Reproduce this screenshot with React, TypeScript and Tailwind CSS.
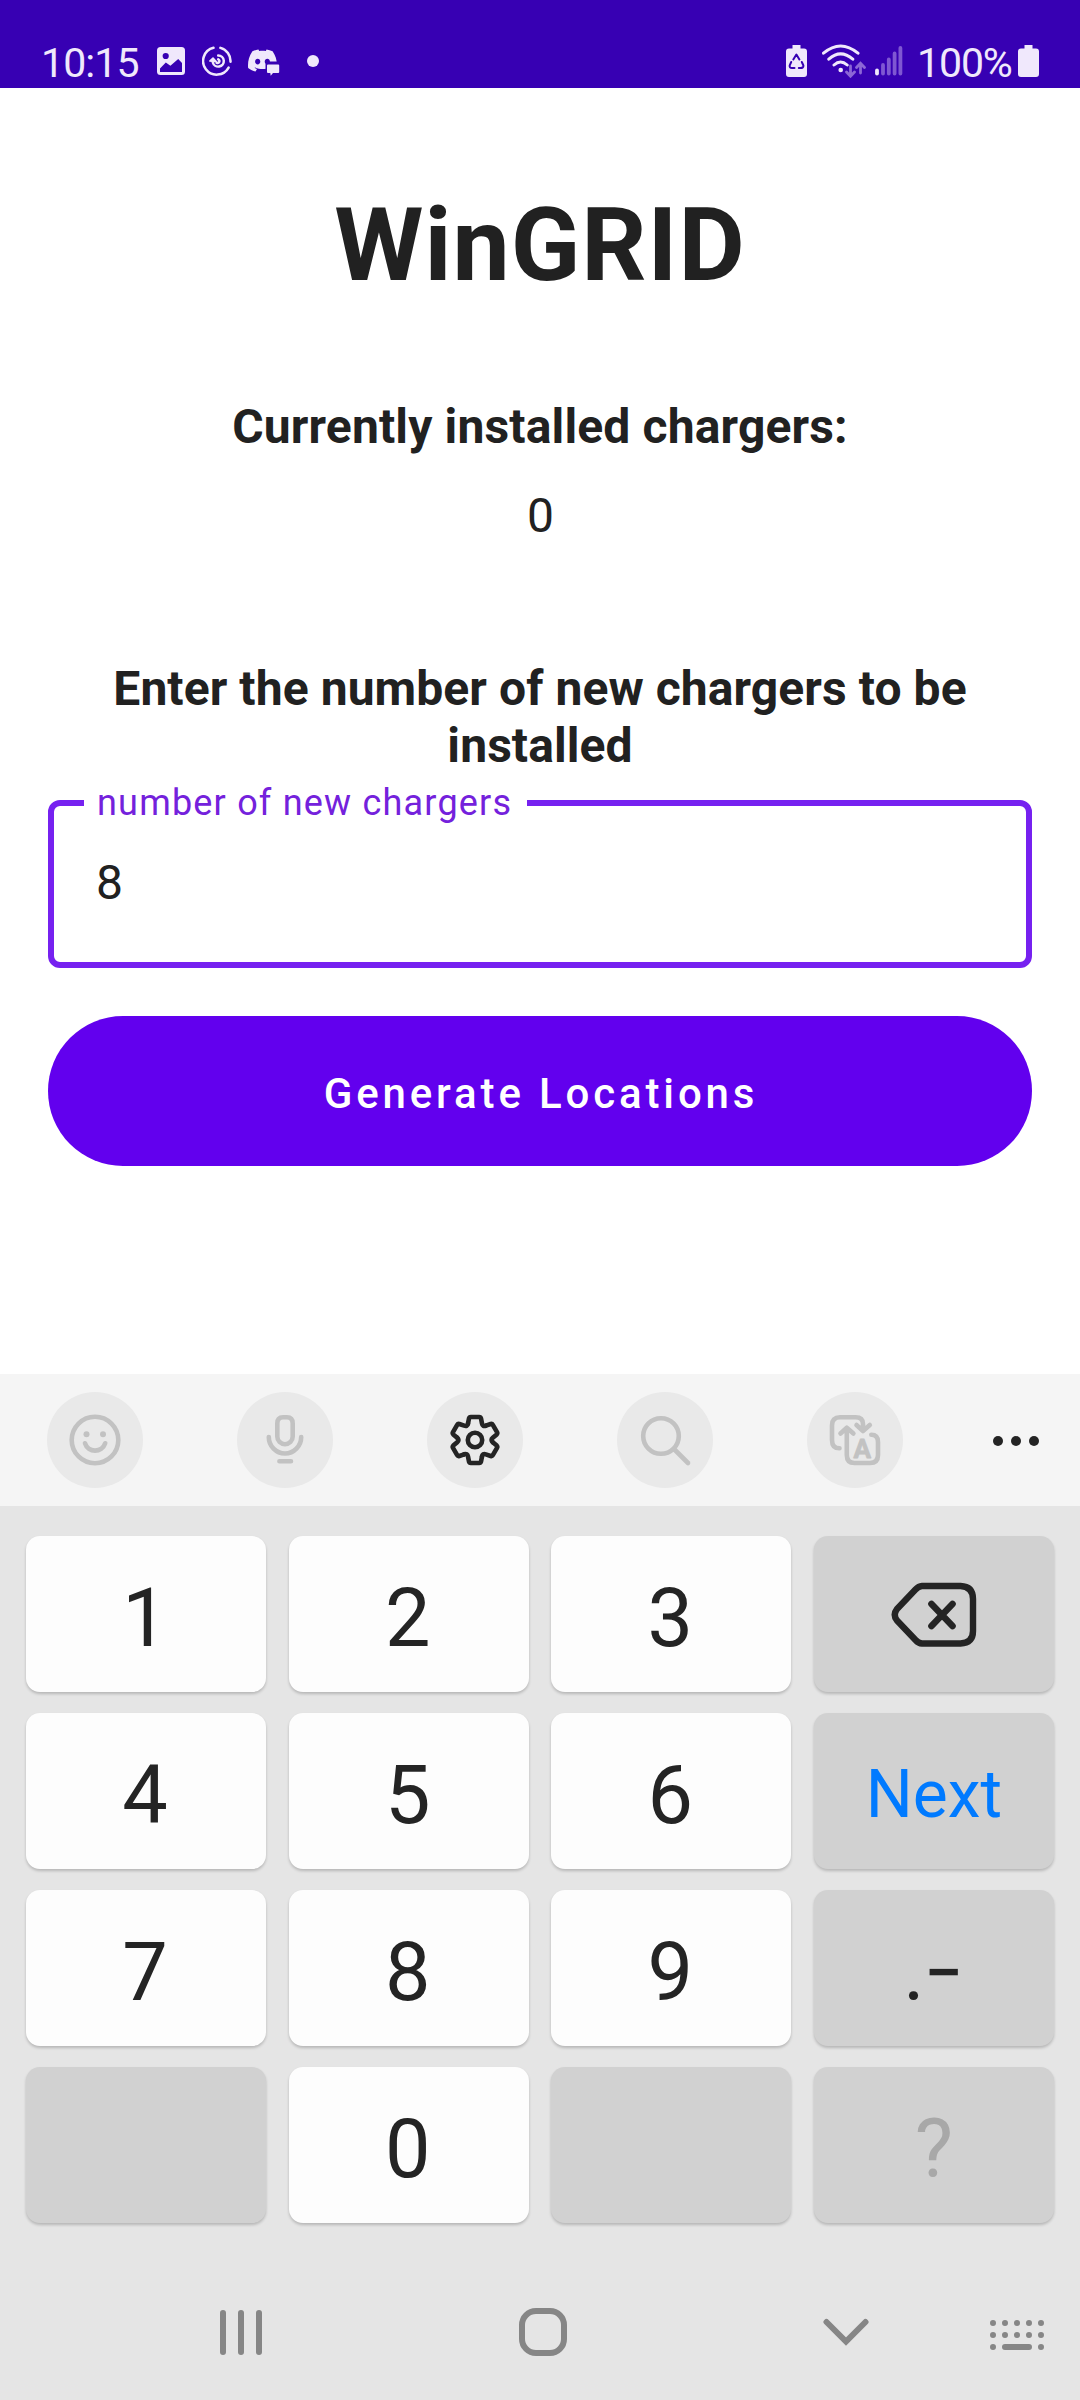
import { useState, type ReactNode } from "react";
import { SiDiscord } from "react-icons/si";

/* ── Status bar ──────────────────────────────────────────────────────── */
function ImageIcon() {
	return (
		<svg className="w-7 h-7" viewBox="0 0 28 28">
			<rect width="28" height="28" rx="3.5" fill="currentColor" />
			<circle cx="8.7" cy="9" r="3.1" fill="#3700b3" />
			<path d="M3 21.5 8.8 15.6 13.4 18.8 21.2 12 25 16V25H3Z" fill="#3700b3" />
		</svg>
	);
}

function SyncIcon() {
	return (
		<svg className="w-[30px] h-[30px]" viewBox="0 0 30 30" fill="none" stroke="currentColor" strokeWidth="2.5" strokeLinecap="round">
			<path d="M11.5 1.8A13.6 13.6 0 1 0 26.6 21.6M18.4 1.9A13.6 13.6 0 0 1 28.5 15.8" />
			<path d="M10.8 16.5A5.6 5.6 0 1 0 16.2 9.4M16.2 13.2C18.6 14.8 17 17.6 14.7 16.8" strokeWidth="2.5" />
			<path d="M7.8 15 11 12 14.2 15.600Z" fill="currentColor" strokeWidth="1.6" strokeLinejoin="round" />
		</svg>
	);
}

function DiscordIcon() {
	return (
		<svg className="w-8 h-[30px]" viewBox="0 0 32 30">
			<SiDiscord x="0" y="0" size={29} color="#f0e8fc" />
			<path d="M20 15.5H33V30H17.5V18Q17.5 15.500 20 15.500Z" fill="#3700b3" />
			<path d="M20 18.5H30.2Q31.2 18.5 31.2 19.5V26Q31.2 27 30.2 27H25L22.7 29.7 22.3 27H20Q19 27 19 26V19.5Q19 18.5 20 18.5Z" fill="currentColor" />
		</svg>
	);
}

function BatteryIcon({ children }: { children?: ReactNode }) {
	return (
		<svg className="w-[21px] h-8" viewBox="0 0 21 32">
			<path d="M6.5 0H14.5V3.5H18Q21 3.5 21 6.5V29Q21 32 18 32H3Q0 32 0 29V6.5Q0 3.5 3 3.5H6.5Z" fill="currentColor" />
			{children}
		</svg>
	);
}

function WifiIcon() {
	return (
		<svg className="w-11 h-[34px]" viewBox="0 0 44 34" fill="none" stroke="currentColor" strokeWidth="3" strokeLinecap="round">
			<path d="M1.5 9.2Q18.5-5.2 36 9.2M6.8 15.2Q18.5 4.5 30.800 15.2M12 21Q18.5 15 25.2 21" />
			<circle cx="18.7" cy="26" r="2.3" fill="currentColor" stroke="none" />
			<path d="M28.5 22V32M24.5 28 28.5 32.2 32.5 28M38.5 29V19.5M34.5 23.5 38.5 19.2 42.5 23.5" stroke="#8c66d6" strokeWidth="2.8" />
		</svg>
	);
}

function SignalIcon() {
	return (
		<svg className="w-7 h-[30px]" viewBox="0 0 28 30" strokeWidth="3.8" strokeLinecap="round">
			<path d="M2 24.5V27.5" stroke="#f0e8fc" />
			<path d="M8 19V27.5M13.8 13.5V27.5M19.6 7.5V27.5M25.4 2V27.5" stroke="#7f57d2" />
		</svg>
	);
}

function StatusBar() {
	return (
		<div className="flex h-[88px] items-center bg-[#3700b3] pt-[34px] pl-[41px] pr-[41px] text-[#f0e8fc]">
			<span className="w-[116px] pt-[4px] text-[41px] leading-none tracking-[-0.9px]">10:15</span>
			<ImageIcon />
			<span className="ml-[17px]"><SyncIcon /></span>
			<span className="ml-[16px]"><DiscordIcon /></span>
			<span className="ml-[27px] h-3 w-3 rounded-full bg-[#f0e8fc]" />
			<div className="ml-auto flex items-center">
				<BatteryIcon>
					<path
						d="M7.3 14.5 10.4 9.5 13.4 14.5M15.8 17 17.4 20.5Q17.6 23 14.5 23H12.8M8.5 23H6Q3.2 23 3.7 20.3L5.2 17"
						fill="none" stroke="#3700b3" strokeWidth="2" strokeLinecap="round" strokeLinejoin="round"
					/>
				</BatteryIcon>
				<span className="ml-[15px]"><WifiIcon /></span>
				<span className="ml-[9px]"><SignalIcon /></span>
				<span className="ml-[14px] w-[101px] pt-[4px] text-[41px] leading-none tracking-[-1.1px]">100%</span>
				<BatteryIcon />
			</div>
		</div>
	);
}

/* ── Keyboard toolbar ────────────────────────────────────────────────── */
function SmileIcon() {
	return (
		<>
			<circle cx="48" cy="48" r="23.3" />
			<path d="M38 51.3C41 61 55 61 58.2 51.3" />
			<circle cx="39.5" cy="42.3" r="3" fill="currentColor" stroke="none" />
			<circle cx="56" cy="42.3" r="3" fill="currentColor" stroke="none" />
		</>
	);
}

function MicIcon() {
	return (
		<>
			<path d="M40.3 31.5Q40.3 25.3 46 25.3H50Q55.7 25.3 55.7 31.5V44.5A7.7 7.7 0 0 1 40.3 44.5Z" />
			<path d="M31.8 45A16.2 16.5 0 0 0 64.2 45M42.4 69.3H54" />
		</>
	);
}

function GearIcon() {
	// one tooth plus the valley to its right, repeated every 60 degrees
	const tooth = "M-7-16.5-6-21.6Q-5.6-23-4.2-23H4.2Q5.6-23 6-21.6L7-16.5Q7.6-13.2 10.8-14.3";
	return (
		<g transform="translate(48 48)">
			<path d={tooth} />
			<path d={tooth} transform="rotate(60)" />
			<path d={tooth} transform="rotate(120)" />
			<path d={tooth} transform="rotate(180)" />
			<path d={tooth} transform="rotate(240)" />
			<path d={tooth} transform="rotate(300)" />
			<circle r="7.2" />
		</g>
	);
}

function SearchIcon() {
	return (
		<>
			<circle cx="44" cy="44" r="17.8" />
			<path d="M57.5 57.5 71 71" />
		</>
	);
}

function TranslateIcon() {
	return (
		<>
			<path d="M32.5 56.3Q25 56.3 25 48V33.5Q25 25.3 33 25.3H48.5Q56 25.3 56 32V38.5M49.5 33 56 39 62.8 33" />
			<path d="M64.3 42.7Q71 42.7 71 50V63Q71 71 63 71H47.5Q39.8 71 39.8 63V36.5M33.5 41.5 39.8 35.7 46.4 41.5" />
			<text x="55.3" y="65.6" textAnchor="middle" fill="currentColor" stroke="currentColor" strokeWidth="0.8" fontSize="26" fontWeight="700">A</text>
		</>
	);
}

const TOOLS = [
	{ name: "emoji", icon: <SmileIcon />, active: false },
	{ name: "voice", icon: <MicIcon />, active: false },
	{ name: "settings", icon: <GearIcon />, active: true },
	{ name: "search", icon: <SearchIcon />, active: false },
	{ name: "translate", icon: <TranslateIcon />, active: false },
];

function Toolbar() {
	return (
		<div className="flex h-[132px] items-center bg-[#f5f5f5] pl-[47px]">
			<div className="flex gap-[94px]">
				{TOOLS.map((tool) => (
					<button
						key={tool.name}
						className={`h-24 w-24 rounded-full bg-[#e9e9e9] ${tool.active ? "text-[#242424]" : "text-[#c2c2c2]"}`}
					>
						<svg className="h-24 w-24" viewBox="0 0 96 96" fill="none" stroke="currentColor" strokeWidth="4.6" strokeLinecap="round" strokeLinejoin="round">
							{tool.icon}
						</svg>
					</button>
				))}
			</div>
			<div className="ml-[90px] mt-[2px] flex gap-[8px]">
				<span className="h-[10px] w-[10px] rounded-full bg-[#242424]" />
				<span className="h-[10px] w-[10px] rounded-full bg-[#242424]" />
				<span className="h-[10px] w-[10px] rounded-full bg-[#242424]" />
			</div>
		</div>
	);
}

/* ── Keypad ──────────────────────────────────────────────────────────── */
function BackspaceIcon() {
	return (
		<svg className="mt-[2px] h-[66px] w-[86px]" viewBox="0 0 86 66" fill="none" stroke="#242424" strokeWidth="6.4" strokeLinecap="round" strokeLinejoin="round">
			<path d="M31 4H69.5Q82 4.5 82 17V49Q82 61 69.5 61.5H31Q27.5 61.3 24.5 58L6 38.5Q1.5 32.8 6 27L24.5 7.5Q27.5 4.2 31 4Z" />
			<path d="M40.5 22 61.5 44M61.5 22 40.5 44" strokeWidth="6.6" />
		</svg>
	);
}

interface KeyProps {
	children?: ReactNode;
	dark?: boolean;
	onPress?: () => void;
}

function Key({ children, dark, onPress }: KeyProps) {
	return (
		<button
			onClick={onPress}
			className={`flex h-[156px] items-center justify-center rounded-[14px] text-[81px] leading-none text-[#242424]
			            shadow-[0_2px_3px_rgba(0,0,0,0.2)] ${dark ? "bg-[#d1d1d1]" : "bg-[#fdfdfd]"}`}
		>
			{children}
		</button>
	);
}

function Digit({ value, onDigit }: { value: string; onDigit: (d: string) => void }) {
	return (
		<Key onPress={() => onDigit(value)}>
			<span className="pt-[8px] pr-[2px]">{value}</span>
		</Key>
	);
}

function Keypad({ onDigit, onBackspace }: { onDigit: (d: string) => void; onBackspace: () => void }) {
	return (
		<div className="grid grid-cols-4 gap-x-[22.67px] gap-y-[21px] px-[26px] pt-[30px]">
			{["1", "2", "3"].map((d) => <Digit key={d} value={d} onDigit={onDigit} />)}
			<Key dark onPress={onBackspace}><BackspaceIcon /></Key>
			{["4", "5", "6"].map((d) => <Digit key={d} value={d} onDigit={onDigit} />)}
			<Key dark><span className="pt-[7px] text-[66px] text-[#007aff]">Next</span></Key>
			{["7", "8", "9"].map((d) => <Digit key={d} value={d} onDigit={onDigit} />)}
			<Key dark>
				<span className="pt-[8px] pr-[2px]">.<span className="relative top-[-4px] text-[68px] font-medium">−</span></span>
			</Key>
			<Key dark />
			<Digit value="0" onDigit={onDigit} />
			<Key dark />
			<Key dark><span className="pt-[8px] text-[#a8a8a8]">?</span></Key>
		</div>
	);
}

/* ── Navigation bar ──────────────────────────────────────────────────── */
function NavBar() {
	return (
		<div className="mt-auto flex h-[136px] items-center pl-[220px] text-[#868686]">
			<div className="flex gap-[12px]">
				<span className="h-[45px] w-[6px] rounded-full bg-current" />
				<span className="h-[45px] w-[6px] rounded-full bg-current" />
				<span className="h-[45px] w-[6px] rounded-full bg-current" />
			</div>
			<span className="ml-[257px] h-12 w-12 rounded-[17px] border-[6px] border-current" />
			<svg className="ml-[256px] h-[28px] w-[46px]" viewBox="0 0 46 28" fill="none" stroke="currentColor" strokeWidth="6" strokeLinecap="round">
				<path d="M3.5 4 23 23.5 42.5 4" />
			</svg>
			<svg className="ml-[121px] mt-[6px] h-[30px] w-[54px]" viewBox="0 0 54 30" fill="none" stroke="currentColor" strokeWidth="6" strokeLinecap="round">
				<path d="M3 3H51.1M3 15H51.1" strokeDasharray="0 12" />
				<path d="M3 27H3M15 27H39M51 27H51" />
			</svg>
		</div>
	);
}

export default function App() {
	const [amount, setAmount] = useState("8");

	return (
		<div className="flex h-[2400px] w-[1080px] flex-col bg-white font-['Roboto',sans-serif] text-[#212121]">
			<StatusBar />

			<main className="flex h-[1286px] flex-col px-[48px] pt-[97px] text-center text-[48px] leading-[57px]">
				<h1 className="text-[102px] font-bold leading-[120px] tracking-[1px]">WinGRID</h1>
				<h2 className="mt-[93px] font-bold tracking-[0.15px]">Currently installed chargers:</h2>
				<p className="mt-[32px] pl-px">0</p>
				<h2 className="mt-[116px] font-bold tracking-[0.08px]">Enter the number of new chargers to be installed</h2>

				<label className="relative mt-[26px] block h-[168px] rounded-[12px] border-[6px] border-[#7621f0]">
					<span className="absolute left-[30px] top-[-24px] bg-white pl-[13px] pr-[15px] text-[36px] leading-[42px] tracking-[1.2px] text-[#7421dc]">
						number of new chargers
					</span>
					<input
						value={amount}
						onChange={(e) => setAmount(e.target.value)}
						className="h-full w-full px-[42px] pb-[3px] outline-none"
					/>
				</label>

				<button className="mt-[48px] h-[150px] rounded-full bg-[#6200ee] pt-[4px] pl-[2px] text-[42px] font-medium tracking-[3.85px] text-white">
					Generate Locations
				</button>
			</main>

			<Toolbar />
			<div className="flex flex-1 flex-col bg-[#e5e5e5]">
				<Keypad
					onDigit={(d) => setAmount((prev) => prev + d)}
					onBackspace={() => setAmount((prev) => prev.slice(0, -1))}
				/>
				<NavBar />
			</div>
		</div>
	);
}
